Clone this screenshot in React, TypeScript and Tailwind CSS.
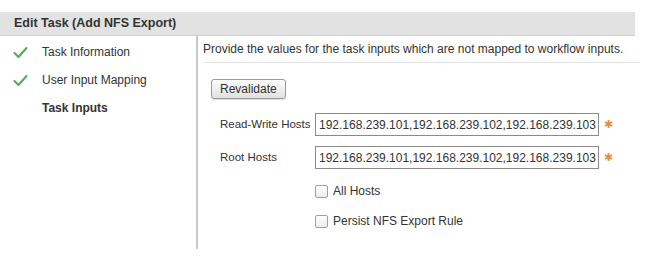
import React from "react";

function Check() {
  return (
    <svg width="15" height="13" viewBox="0 0 15 13" className="shrink-0">
      <path d="M1.5 7 L5.5 11 L13.5 2" fill="none" stroke="#4caf50" strokeWidth="2" strokeLinecap="round" strokeLinejoin="round" />
    </svg>
  );
}

function Field({ label, value }: { label: string; value: string }) {
  return (
    <div className="flex items-center h-[23px]">
      <div className="w-[95px] shrink-0 text-[11.5px]">{label}</div>
      <div className="w-[284px] h-[23px] border border-[#8a8a8a] bg-white flex items-center pl-[3px] overflow-hidden whitespace-nowrap text-[12px]">
        {value}
      </div>
      <span className="ml-[5px] text-[#f08a3c] text-[11px] leading-none">✱</span>
    </div>
  );
}

function Box({ label }: { label: string }) {
  return (
    <div className="flex items-center gap-[5px] pl-[95px] h-[14px]">
      <div className="w-[13px] h-[13px] border border-[#a0a0a0] rounded-[2px] bg-gradient-to-b from-white to-[#ececec]" />
      <span>{label}</span>
    </div>
  );
}

export default function App() {
  const ips = "192.168.239.101,192.168.239.102,192.168.239.103";
  return (
    <div className="w-[649px] h-[263px] bg-white text-[#333] text-[12px] font-['Liberation_Sans',Arial,sans-serif] pt-[12px]">
      <div className="w-[635px] h-[24px] bg-[#e2e2e2] border-b border-[#cfcfcf] flex items-center pl-[14px] font-bold text-[12.5px] text-[#333]">
        Edit Task (Add NFS Export)
      </div>
      <div className="flex">
        <div className="w-[198px] h-[213px] border-r-[2px] border-[#c8c8c8] pt-[8px] shrink-0">
          <div className="flex items-center h-[16px] pl-[13px] gap-[14px]">
            <Check />
            <span>Task Information</span>
          </div>
          <div className="flex items-center h-[16px] pl-[13px] gap-[14px] mt-[12px]">
            <Check />
            <span>User Input Mapping</span>
          </div>
          <div className="flex items-center h-[16px] pl-[42px] mt-[12px] font-bold">Task Inputs</div>
        </div>
        <div className="flex-1 pl-[5px] pr-[9px]">
          <div className="h-[27px] flex items-center border-b border-[#e4e4e4] text-[12px]">
            Provide the values for the task inputs which are not mapped to workflow inputs.
          </div>
          <div className="pl-[8px] pt-[16px]">
            <button className="h-[20px] px-[8px] border border-[#9a9a9a] rounded-[3px] bg-gradient-to-b from-[#fdfdfd] to-[#e0e0e0] shadow-[0_1px_1px_rgba(0,0,0,0.15)] text-[12px] text-[#333]">
              Revalidate
            </button>
          </div>
          <div className="pl-[17px] pt-[14px] flex flex-col gap-[10px]">
            <Field label="Read-Write Hosts" value={ips} />
            <Field label="Root Hosts" value={ips} />
          </div>
          <div className="pl-[17px] pt-[15px] flex flex-col gap-[16px]">
            <Box label="All Hosts" />
            <Box label="Persist NFS Export Rule" />
          </div>
        </div>
      </div>
    </div>
  );
}
